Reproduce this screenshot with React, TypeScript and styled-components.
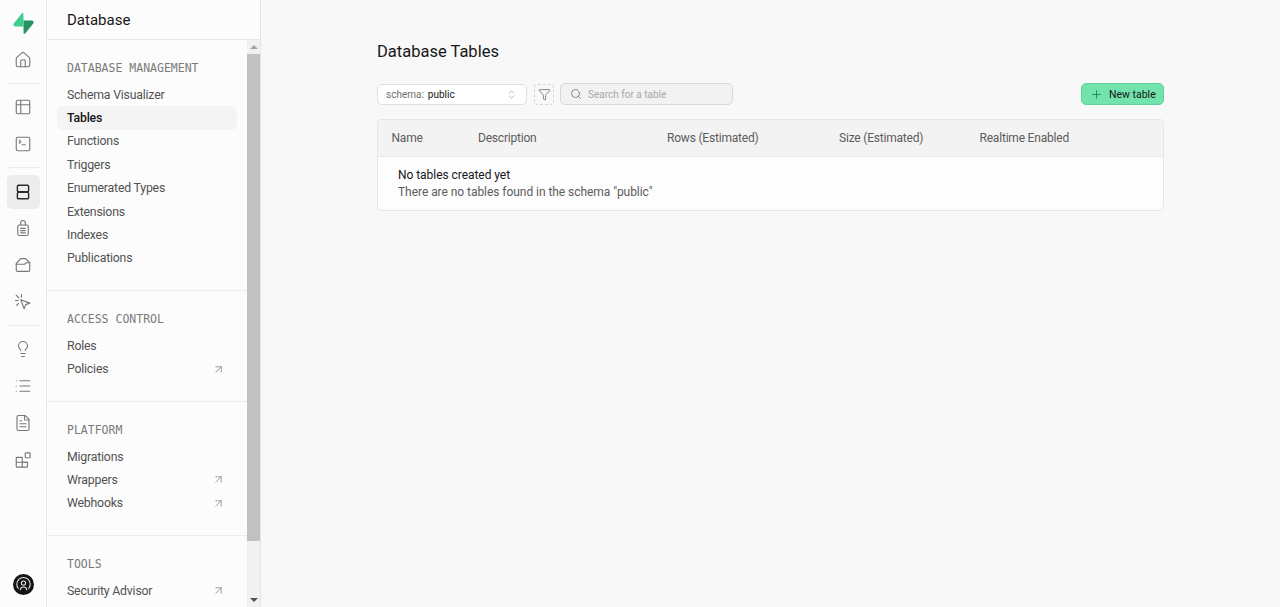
import React from "react";
import styled, { createGlobalStyle } from "styled-components";
import { Home, Table2, SquareTerminal, Lightbulb, List, FileText, ArrowUpRight, Search, ChevronsUpDown, Filter, Plus } from "lucide-react";

const Global = createGlobalStyle`
  html, body {
    margin: 0;
    height: 100%;
    overflow: hidden;
    background: #f8f8f8;
    font-family: Roboto, "Liberation Sans", sans-serif;
  }
  * {
    box-sizing: border-box;
  }
`;

const Page = styled.div`
  display: flex;
  height: 607px;
`;

const Rail = styled.aside`
  width: 47px;
  flex: none;
  display: flex;
  flex-direction: column;
  align-items: center;
  background: #fcfcfc;
  border-right: 1px solid #e8e8e8;
  padding-top: 6px;
  color: #707070;
`;

const LogoSlot = styled.div`
  height: 35px;
  margin-bottom: 2px;
  flex: none;
  display: flex;
  align-items: center;
  justify-content: center;
`;

const RailSlot = styled.div<{ $active?: boolean }>`
  width: 33px;
  height: 34px;
  flex: none;
  margin-bottom: ${(p) => (p.$active ? 2 : 3)}px;
  display: flex;
  align-items: center;
  justify-content: center;
  border-radius: 5px;
  background: ${(p) => (p.$active ? "#ededed" : "transparent")};
  color: ${(p) => (p.$active ? "#2b2b2b" : "#777777")};
`;

const RailDivider = styled.div<{ $wide?: boolean }>`
  width: 33px;
  height: 1px;
  background: #ececec;
  margin: 3px 0 ${(p) => (p.$wide ? 7 : 6)}px;
  flex: none;
`;

const Avatar = styled.div`
  margin-top: auto;
  margin-bottom: 12px;
  width: 21px;
  height: 21px;
  border-radius: 50%;
  background: #141414;
  color: #e4e4e4;
  display: flex;
  align-items: center;
  justify-content: center;
`;

const Sidebar = styled.aside`
  width: 214px;
  flex: none;
  display: flex;
  flex-direction: column;
  background: #fcfcfc;
  border-right: 1px solid #e4e4e4;
`;

const SidebarHead = styled.div`
  height: 40px;
  flex: none;
  display: flex;
  align-items: center;
  padding: 0 20px;
  font-size: 15px;
  color: #171717;
  border-bottom: 1px solid #e6e6e6;
`;

const SidebarBody = styled.div`
  flex: 1;
  min-height: 0;
  display: flex;
`;

const Nav = styled.nav`
  flex: 1;
  min-width: 0;
  overflow: hidden;
`;

const Section = styled.section`
  padding: 17px 10px 20px;
  border-bottom: 1px solid #ececec;

  &:last-child {
    border-bottom: 0;
  }
`;

const SectionTitle = styled.h3`
  margin: 0 0 4px;
  padding-left: 10px;
  height: 22px;
  line-height: 22px;
  font-family: "DejaVu Sans Mono", monospace;
  font-weight: 400;
  font-size: 11.5px;
  color: #7a7a7a;
`;

const NavItem = styled.div<{ $active?: boolean }>`
  height: 23.4px;
  display: flex;
  align-items: center;
  justify-content: space-between;
  padding: 0 12px 0 10px;
  border-radius: 6px;
  font-size: 12.3px;
  letter-spacing: -0.2px;
  color: ${(p) => (p.$active ? "#171717" : "#525252")};
  font-weight: ${(p) => (p.$active ? 500 : 400)};
  background: ${(p) => (p.$active ? "#f4f4f4" : "transparent")};
  svg {
    color: #8a8a8a;
  }
`;

const Scrollbar = styled.div`
  width: 13px;
  flex: none;
  display: flex;
  flex-direction: column;
  align-items: center;
  background: #f1f1f1;
`;

const ScrollArrow = styled.div<{ $down?: boolean }>`
  height: 14px;
  flex: none;
  display: flex;
  align-items: center;
  justify-content: center;
  &::before {
    content: "";
    border-left: 4px solid transparent;
    border-right: 4px solid transparent;
    ${(p) => (p.$down ? "border-top: 4px solid #505050;" : "border-bottom: 4px solid #a3a3a3;")}
  }
`;

const ScrollThumb = styled.div`
  width: 100%;
  height: 487px;
  flex: none;
  background: #c1c1c1;
`;

const ScrollGap = styled.div`
  flex: 1;
`;

const Main = styled.main`
  flex: 1;
  min-width: 0;
  padding: 40px 116px 0 116px;
`;

const Title = styled.h1`
  margin: 0 0 20px;
  height: 23px;
  line-height: 23px;
  font-size: 16.5px;
  font-weight: 400;
  color: #171717;
`;

const Toolbar = styled.div`
  display: flex;
  align-items: center;
  height: 22px;
  margin-bottom: 14px;
`;

const SchemaSelect = styled.div`
  width: 150px;
  height: 21px;
  display: flex;
  align-items: center;
  padding: 0 8px;
  background: #ffffff;
  border: 1px solid #dfdfdf;
  border-radius: 5px;
  font-size: 10px;
  color: #171717;
  svg {
    margin-left: auto;
    margin-right: 1px;
    color: #9a9a9a;
  }
`;

const SchemaLabel = styled.span`
  color: #707070;
  margin-right: 4px;
`;

const FilterButton = styled.div`
  width: 20px;
  height: 21px;
  margin-left: 7px;
  display: flex;
  align-items: center;
  justify-content: center;
  border: 1px dashed #d4d4d4;
  border-radius: 4px;
  color: #6a6a6a;
`;

const SearchBox = styled.div`
  width: 173px;
  height: 22px;
  margin-left: 6px;
  display: flex;
  align-items: center;
  gap: 6px;
  padding: 0 9px;
  background: #f2f2f2;
  border: 1px solid #d8d8d8;
  border-radius: 5px;
  font-size: 10px;
  color: #a8a8a8;
  svg {
    color: #6e6e6e;
    flex: none;
  }
`;

const NewButton = styled.div`
  margin-left: auto;
  width: 83px;
  height: 22px;
  display: flex;
  align-items: center;
  gap: 6px;
  padding-left: 8px;
  background: #72e3ad;
  border: 1px solid #5fd49d;
  border-radius: 5px;
  font-size: 10.5px;
  color: #171717;
  svg {
    color: #1f7a52;
    flex: none;
  }
`;

const TableCard = styled.div`
  background: #fdfdfd;
  border: 1px solid #e6e6e6;
  border-radius: 4px;
  overflow: hidden;
`;

const HeadRow = styled.div`
  height: 37px;
  display: grid;
  grid-template-columns: 86.5px 189px 172px 140.5px 1fr;
  align-items: center;
  padding: 0 0 1px 13.5px;
  background: #f3f3f3;
  border-bottom: 1px solid #e8e8e8;
  font-size: 12px;
  letter-spacing: -0.2px;
  color: #5c5c5c;
`;

const EmptyState = styled.div`
  height: 53px;
  padding: 10px 20px 0;
  font-size: 12px;
  letter-spacing: -0.05px;
  line-height: 17px;
  color: #5c5c5c;
`;

const EmptyTitle = styled.div`
  color: #171717;
`;

const icon = {
  width: 18,
  height: 18,
  viewBox: "0 0 24 24",
  fill: "none",
  stroke: "currentColor",
  strokeWidth: 1.5,
  strokeLinecap: "round" as const,
  strokeLinejoin: "round" as const,
};

const Logo = () => (
  <svg width="21" height="21" viewBox="0 0 109 113">
    <path
      d="M63.7 110.3c-2.9 3.6-8.7 1.6-8.7-3L54 40.1h45.2c8.2 0 12.8 9.5 7.7 15.9L63.7 110.3Z"
      fill="#249361"
    />
    <path
      d="M45.3 2.1c2.9-3.6 8.7-1.6 8.7 3l.5 67.2H9.8c-8.2 0-12.8-9.5-7.7-15.9L45.3 2.1Z"
      fill="#3ecf8e"
    />
  </svg>
);

const DatabaseIcon = () => (
  <svg {...icon} strokeWidth={1.9}>
    <rect x="4.5" y="3" width="15" height="8.5" rx="1.5" />
    <rect x="4.5" y="12.5" width="15" height="8.5" rx="1.5" />
  </svg>
);

const AuthIcon = () => (
  <svg {...icon}>
    <path d="M9 8V5a3 3 0 0 1 6 0v3" />
    <rect x="5" y="8" width="14" height="14" rx="2" />
    <path d="M9 12.5h6M9 15.5h6M9 18.5h6" />
  </svg>
);

const StorageIcon = () => (
  <svg {...icon}>
    <path d="M3 10 9 3.5h6.5L21 9v9.5a2 2 0 0 1-2 2H5a2 2 0 0 1-2-2V10Z" />
    <path d="M3 11h11l2.5-2H21" />
  </svg>
);

const EdgeIcon = () => (
  <svg {...icon}>
    <path d="m9 9 12 4.5-5.5 2L13.5 21 9 9Z" />
    <path d="M3 3l3.5 3.5M2 10h3.5M10 2v3.5M3.5 16.5 6 14" />
  </svg>
);

const ExtensionIcon = () => (
  <svg {...icon}>
    <path d="M3 9.5a1 1 0 0 1 1-1h7v13H4a1 1 0 0 1-1-1V9.5ZM3 15h15" />
    <path d="M11 21.5h6a1 1 0 0 0 1-1V15h-7" />
    <rect x="15" y="2.5" width="6.5" height="6.5" rx="1" />
  </svg>
);

const AvatarIcon = () => (
  <svg width="17" height="17" viewBox="0 0 24 24" fill="none" stroke="currentColor" strokeWidth="1.5">
    <path d="M5 18A9.5 9.5 0 1 1 19 18" />
    <circle cx="12" cy="10" r="3" />
    <path d="M7.5 20a4.5 4.5 0 0 1 9 0" />
  </svg>
);

const railTop = [{ key: "home", node: <Home {...icon} /> }];
const railTools = [
  { key: "table", node: <Table2 {...icon} /> },
  { key: "sql", node: <SquareTerminal {...icon} /> },
];
const railData = [
  { key: "db", node: <DatabaseIcon />, active: true },
  { key: "auth", node: <AuthIcon /> },
  { key: "storage", node: <StorageIcon /> },
  { key: "edge", node: <EdgeIcon /> },
];
const railMore = [
  { key: "advisor", node: <Lightbulb {...icon} /> },
  { key: "logs", node: <List {...icon} /> },
  { key: "docs", node: <FileText {...icon} /> },
  { key: "ext", node: <ExtensionIcon /> },
];

const sections = [
  {
    title: "DATABASE MANAGEMENT",
    items: [
      { label: "Schema Visualizer" },
      { label: "Tables", active: true },
      { label: "Functions" },
      { label: "Triggers" },
      { label: "Enumerated Types" },
      { label: "Extensions" },
      { label: "Indexes" },
      { label: "Publications" },
    ],
  },
  {
    title: "ACCESS CONTROL",
    items: [{ label: "Roles" }, { label: "Policies", external: true }],
  },
  {
    title: "PLATFORM",
    items: [
      { label: "Migrations" },
      { label: "Wrappers", external: true },
      { label: "Webhooks", external: true },
    ],
  },
  {
    title: "TOOLS",
    items: [{ label: "Security Advisor", external: true }],
  },
];

const columns = ["Name", "Description", "Rows (Estimated)", "Size (Estimated)", "Realtime Enabled"];

const railGroup = (group: { key: string; node: React.ReactNode; active?: boolean }[]) =>
  group.map((r) => (
    <RailSlot key={r.key} $active={r.active}>
      {r.node}
    </RailSlot>
  ));

export default function App() {
  return (
    <Page>
      <Global />
      <Rail>
        <LogoSlot>
          <Logo />
        </LogoSlot>
        {railGroup(railTop)}
        <RailDivider />
        {railGroup(railTools)}
        <RailDivider $wide />
        {railGroup(railData)}
        <RailDivider />
        {railGroup(railMore)}
        <Avatar>
          <AvatarIcon />
        </Avatar>
      </Rail>
      <Sidebar>
        <SidebarHead>Database</SidebarHead>
        <SidebarBody>
          <Nav>
            {sections.map((s) => (
              <Section key={s.title}>
                <SectionTitle>{s.title}</SectionTitle>
                {s.items.map((item) => (
                  <NavItem key={item.label} $active={item.active}>
                    {item.label}
                    {item.external && <ArrowUpRight size={13} strokeWidth={1.5} />}
                  </NavItem>
                ))}
              </Section>
            ))}
          </Nav>
          <Scrollbar>
            <ScrollArrow />
            <ScrollThumb />
            <ScrollGap />
            <ScrollArrow $down />
          </Scrollbar>
        </SidebarBody>
      </Sidebar>
      <Main>
        <Title>Database Tables</Title>
        <Toolbar>
          <SchemaSelect>
            <SchemaLabel>schema:</SchemaLabel>
            public
            <ChevronsUpDown size={11} strokeWidth={1.5} />
          </SchemaSelect>
          <FilterButton>
            <Filter size={13} strokeWidth={1.5} />
          </FilterButton>
          <SearchBox>
            <Search size={12} strokeWidth={1.6} />
            Search for a table
          </SearchBox>
          <NewButton>
            <Plus size={13} strokeWidth={1.6} />
            New table
          </NewButton>
        </Toolbar>
        <TableCard>
          <HeadRow>
            {columns.map((c) => (
              <span key={c}>{c}</span>
            ))}
          </HeadRow>
          <EmptyState>
            <EmptyTitle>No tables created yet</EmptyTitle>
            There are no tables found in the schema "public"
          </EmptyState>
        </TableCard>
      </Main>
    </Page>
  );
}
